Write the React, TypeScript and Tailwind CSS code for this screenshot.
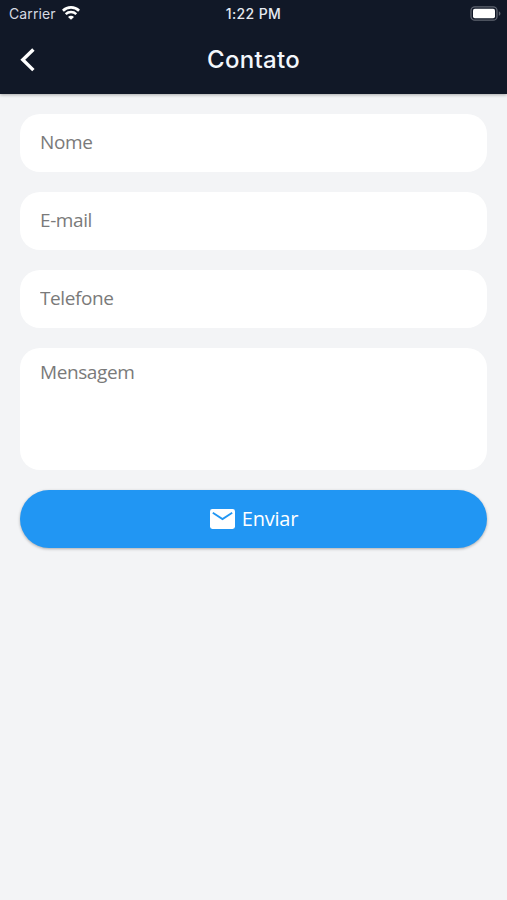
import type { ReactNode } from "react";

/* -------------------------------------------------------------- StatusBar */
function WifiIcon() {
  return (
    <svg className="h-[14px] w-[18px]" viewBox="0 0 18 14" fill="none" stroke="currentColor" aria-hidden>
      <path d="M0.9 4.7a11.7 11.7 0 0 1 16.2 0" strokeWidth="2.7" />
      <path d="M3.7 8.2a7.6 7.6 0 0 1 10.6 0" strokeWidth="2.4" />
      <path d="M9 13.8 6 10.9a4.2 4.2 0 0 1 6 0z" fill="currentColor" stroke="none" />
    </svg>
  );
}

function BatteryIcon() {
  return (
    <svg className="h-[15px] w-[31px]" viewBox="0 0 31 15" aria-hidden>
      <rect x="1" y="0.8" width="26" height="13.4" rx="3.8" fill="none" stroke="#606571" strokeWidth="1.3" />
      <rect x="3" y="2.8" width="22" height="9.4" rx="1.8" fill="#fff" />
      <path d="M28.8 5.2v4.6c2.2-1 2.2-3.6 0-4.6z" fill="#606571" />
    </svg>
  );
}

function StatusBar() {
  return (
    <div className="grid h-[27px] grid-cols-3 items-center font-['Inter','Liberation_Sans',sans-serif] text-[14px] leading-[27px]">
      <div className="flex items-center gap-[6px] pl-[9px] text-[#d6dae2]">
        <span className="tracking-[0.1px]">Carrier</span>
        <span className="-mt-px text-white">
          <WifiIcon />
        </span>
      </div>
      <span className="text-center font-medium tracking-[0.4px] text-[#e6eaf2]">1:22 PM</span>
      <div className="flex justify-end pr-[6px]">
        <BatteryIcon />
      </div>
    </div>
  );
}

/* ----------------------------------------------------------------- Header */
function Header() {
  return (
    <header className="h-[94px] bg-[#111827] shadow-[0_1px_3px_rgba(0,0,0,0.3)]">
      <StatusBar />
      <div className="grid h-[66px] grid-cols-[60px_1fr_60px] items-center">
        <button type="button" aria-label="Voltar" className="pl-5 text-white">
          <svg className="h-[26px] w-4" viewBox="0 0 16 26" fill="none" stroke="currentColor" aria-hidden>
            <path d="M13.4 2.5 2.8 12.8l10.6 10.3" strokeWidth="3.4" />
          </svg>
        </button>
        <h1 className="text-center font-['Inter','Liberation_Sans',sans-serif] text-[24px] font-medium tracking-[0.3px] text-[#f3f6fb]">
          Contato
        </h1>
      </div>
    </header>
  );
}

/* ------------------------------------------------------------------ Field */
const inputClass =
  "block w-full rounded-[20px] bg-white px-5 text-[19px] tracking-[-0.4px] text-gray-700 outline-none placeholder:text-[#7a7a7a]";

function Form({ children }: { children: ReactNode }) {
  return (
    <form className="flex flex-col gap-5 px-5 pt-5" onSubmit={(e) => e.preventDefault()}>
      {children}
    </form>
  );
}

function MailIcon() {
  return (
    <svg className="h-5 w-[25px]" viewBox="0 0 25 20" fill="none" aria-hidden>
      <rect width="25" height="20" rx="2.4" fill="#fff" />
      <path d="m2.8 3.8 9.7 6.2 9.7-6.2" stroke="#2196f3" strokeWidth="1.9" />
    </svg>
  );
}

export default function App() {
  return (
    <main className="h-[900px] w-full overflow-hidden bg-[#f3f4f6] font-['Open_Sans','Noto_Sans',sans-serif]">
      <Header />
      <Form>
        <input className={`h-[58px] pb-[2px] ${inputClass}`} placeholder="Nome" aria-label="Nome" />
        <input className={`h-[58px] pb-[2px] ${inputClass}`} placeholder="E-mail" aria-label="E-mail" />
        <input className={`h-[58px] pb-[2px] ${inputClass}`} placeholder="Telefone" aria-label="Telefone" />
        <textarea
          className={`h-[122px] resize-none pt-[11px] leading-[26px] ${inputClass}`}
          placeholder="Mensagem"
          aria-label="Mensagem"
        />
        <button
          type="submit"
          className="flex h-[58px] items-center justify-center gap-[7px] rounded-full bg-[#2196f3] pl-px text-[20px] tracking-[-0.2px] text-white shadow-[0_1px_3px_rgba(0,0,0,0.3)]"
        >
          <MailIcon />
          Enviar
        </button>
      </Form>
    </main>
  );
}
